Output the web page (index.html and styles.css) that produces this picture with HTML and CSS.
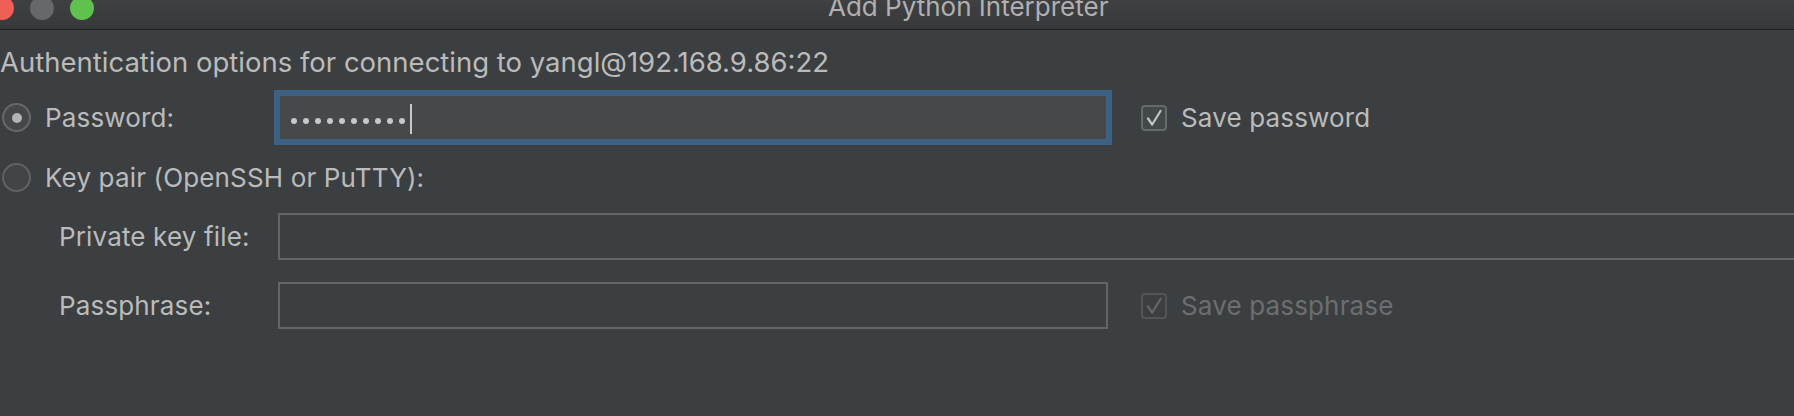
FILE: index.html
```html
<!DOCTYPE html>
<html lang="en">
<head>
<meta charset="utf-8">
<title>Add Python Interpreter</title>
<link rel="stylesheet" href="styles.css">
</head>
<body>
<div class="window">
  <div class="titlebar">
    <div class="lights">
      <span class="light red"></span>
      <span class="light gray"></span>
      <span class="light green"></span>
    </div>
    <div class="title">Add Python Interpreter</div>
  </div>
  <div class="content">
    <div class="header">Authentication options for connecting to yangl@192.168.9.86:22</div>

    <div class="row row-password">
      <div class="lead">
        <span class="radio checked"></span>
        <span class="label">Password:</span>
      </div>
      <div class="field focused">
        <span class="dots"><i></i><i></i><i></i><i></i><i></i><i></i><i></i><i></i><i></i><i></i></span>
        <span class="caret"></span>
      </div>
      <div class="check">
        <span class="box"><svg viewBox="0 0 26 26" width="26" height="26"><path d="M7 13.5 L11.2 19.5 L19.5 6" fill="none" stroke="#c4c4c4" stroke-width="2.2" stroke-linecap="round" stroke-linejoin="round"/></svg></span>
        <span class="label">Save password</span>
      </div>
    </div>

    <div class="row row-keypair">
      <div class="lead">
        <span class="radio"></span>
        <span class="label">Key pair (OpenSSH or PuTTY):</span>
      </div>
    </div>

    <div class="row row-keyfile">
      <div class="lead indent"><span class="label">Private key file:</span></div>
      <div class="field wide"></div>
    </div>

    <div class="row row-phrase">
      <div class="lead indent"><span class="label">Passphrase:</span></div>
      <div class="field"></div>
      <div class="check disabled">
        <span class="box"><svg viewBox="0 0 26 26" width="26" height="26"><path d="M7 13.5 L11.2 19.5 L19.5 6" fill="none" stroke="#646667" stroke-width="2.2" stroke-linecap="round" stroke-linejoin="round"/></svg></span>
        <span class="label">Save passphrase</span>
      </div>
    </div>
  </div>
</div>
</body>
</html>
```

FILE: styles.css
```css
* { box-sizing: border-box; }

html, body {
  margin: 0;
  padding: 0;
  background: #3c3f41;
}

body {
  width: 1794px;
  height: 416px;
  overflow: hidden;
  font-family: Inter, "Liberation Sans", sans-serif;
  font-size: 26px;
  color: #bbbbbb;
}

.titlebar {
  height: 30px;
  border-bottom: 1px solid #1f2022;
  background: linear-gradient(#3e4042, #38393b);
  display: flex;
  align-items: flex-start;
  overflow: hidden;
}

.lights {
  display: flex;
  gap: 16px;
  margin-left: -10px;
  margin-top: -4px;
}

.light {
  width: 24px;
  height: 24px;
  border-radius: 50%;
  display: block;
}
.light.red { background: #ee5f57; }
.light.gray { background: #67686a; }
.light.green { background: #5fc24f; }

.title {
  margin-left: 734px;
  margin-top: -6px;
  line-height: 26px;
  color: #b0b0b0;
  white-space: nowrap;
}

.content {
  display: flex;
  flex-direction: column;
}

.header {
  margin-top: 17px;
  font-size: 27.5px;
  line-height: 30px;
  white-space: nowrap;
}

.row {
  display: flex;
  align-items: center;
  height: 47px;
}

.row-password { margin-top: 17px; }
.row-keypair { margin-top: 13px; height: 46px; }
.row-keyfile { margin-top: 13px; }
.row-phrase { margin-top: 22px; }

.label { letter-spacing: 0.15px; }

.lead {
  width: 278px;
  flex: none;
  display: flex;
  align-items: center;
  gap: 14px;
  padding-left: 2px;
  white-space: nowrap;
}
.lead.indent { padding-left: 59px; }

.radio {
  width: 29px;
  height: 29px;
  border-radius: 50%;
  border: 2px solid #5f6264;
  background: #414547;
  display: flex;
  align-items: center;
  justify-content: center;
  flex: none;
}
.radio.checked { border-color: #65686a; background: #44484a; }
.radio.checked::after {
  content: "";
  width: 10px;
  height: 10px;
  border-radius: 50%;
  background: #b4b4b4;
}

.field {
  width: 830px;
  height: 47px;
  flex: none;
  border: 2px solid #646464;
  background: #3c3f41;
  display: flex;
  align-items: center;
  padding-left: 11px;
}
.field.wide { width: auto; flex: 1; margin-right: -20px; }

.field.focused {
  border-color: #3d6185;
  background: #45494a;
  box-shadow: 0 0 0 4px #3d6185;
  padding-left: 11px;
}

.dots {
  display: flex;
  gap: 6px;
  margin-top: 7px;
}
.dots i {
  display: block;
  width: 6px;
  height: 6px;
  border-radius: 50%;
  background: #c8c8c8;
}

.caret {
  width: 2px;
  height: 30px;
  background: #c8c8c8;
  margin-left: 5px;
  margin-top: 3px;
}

.check {
  display: flex;
  align-items: center;
  gap: 14px;
  margin-left: 33px;
  white-space: nowrap;
}
.check .box {
  width: 26px;
  height: 26px;
  border: 2px solid #676a6c;
  border-radius: 4px;
  background: #43494a;
  position: relative;
  flex: none;
}
.check .box svg {
  position: absolute;
  left: -2px;
  top: -2px;
}
.check.disabled .box {
  border-color: #525557;
  background: #3c3f41;
}
.check.disabled .label { color: #6c6e70; }
```
